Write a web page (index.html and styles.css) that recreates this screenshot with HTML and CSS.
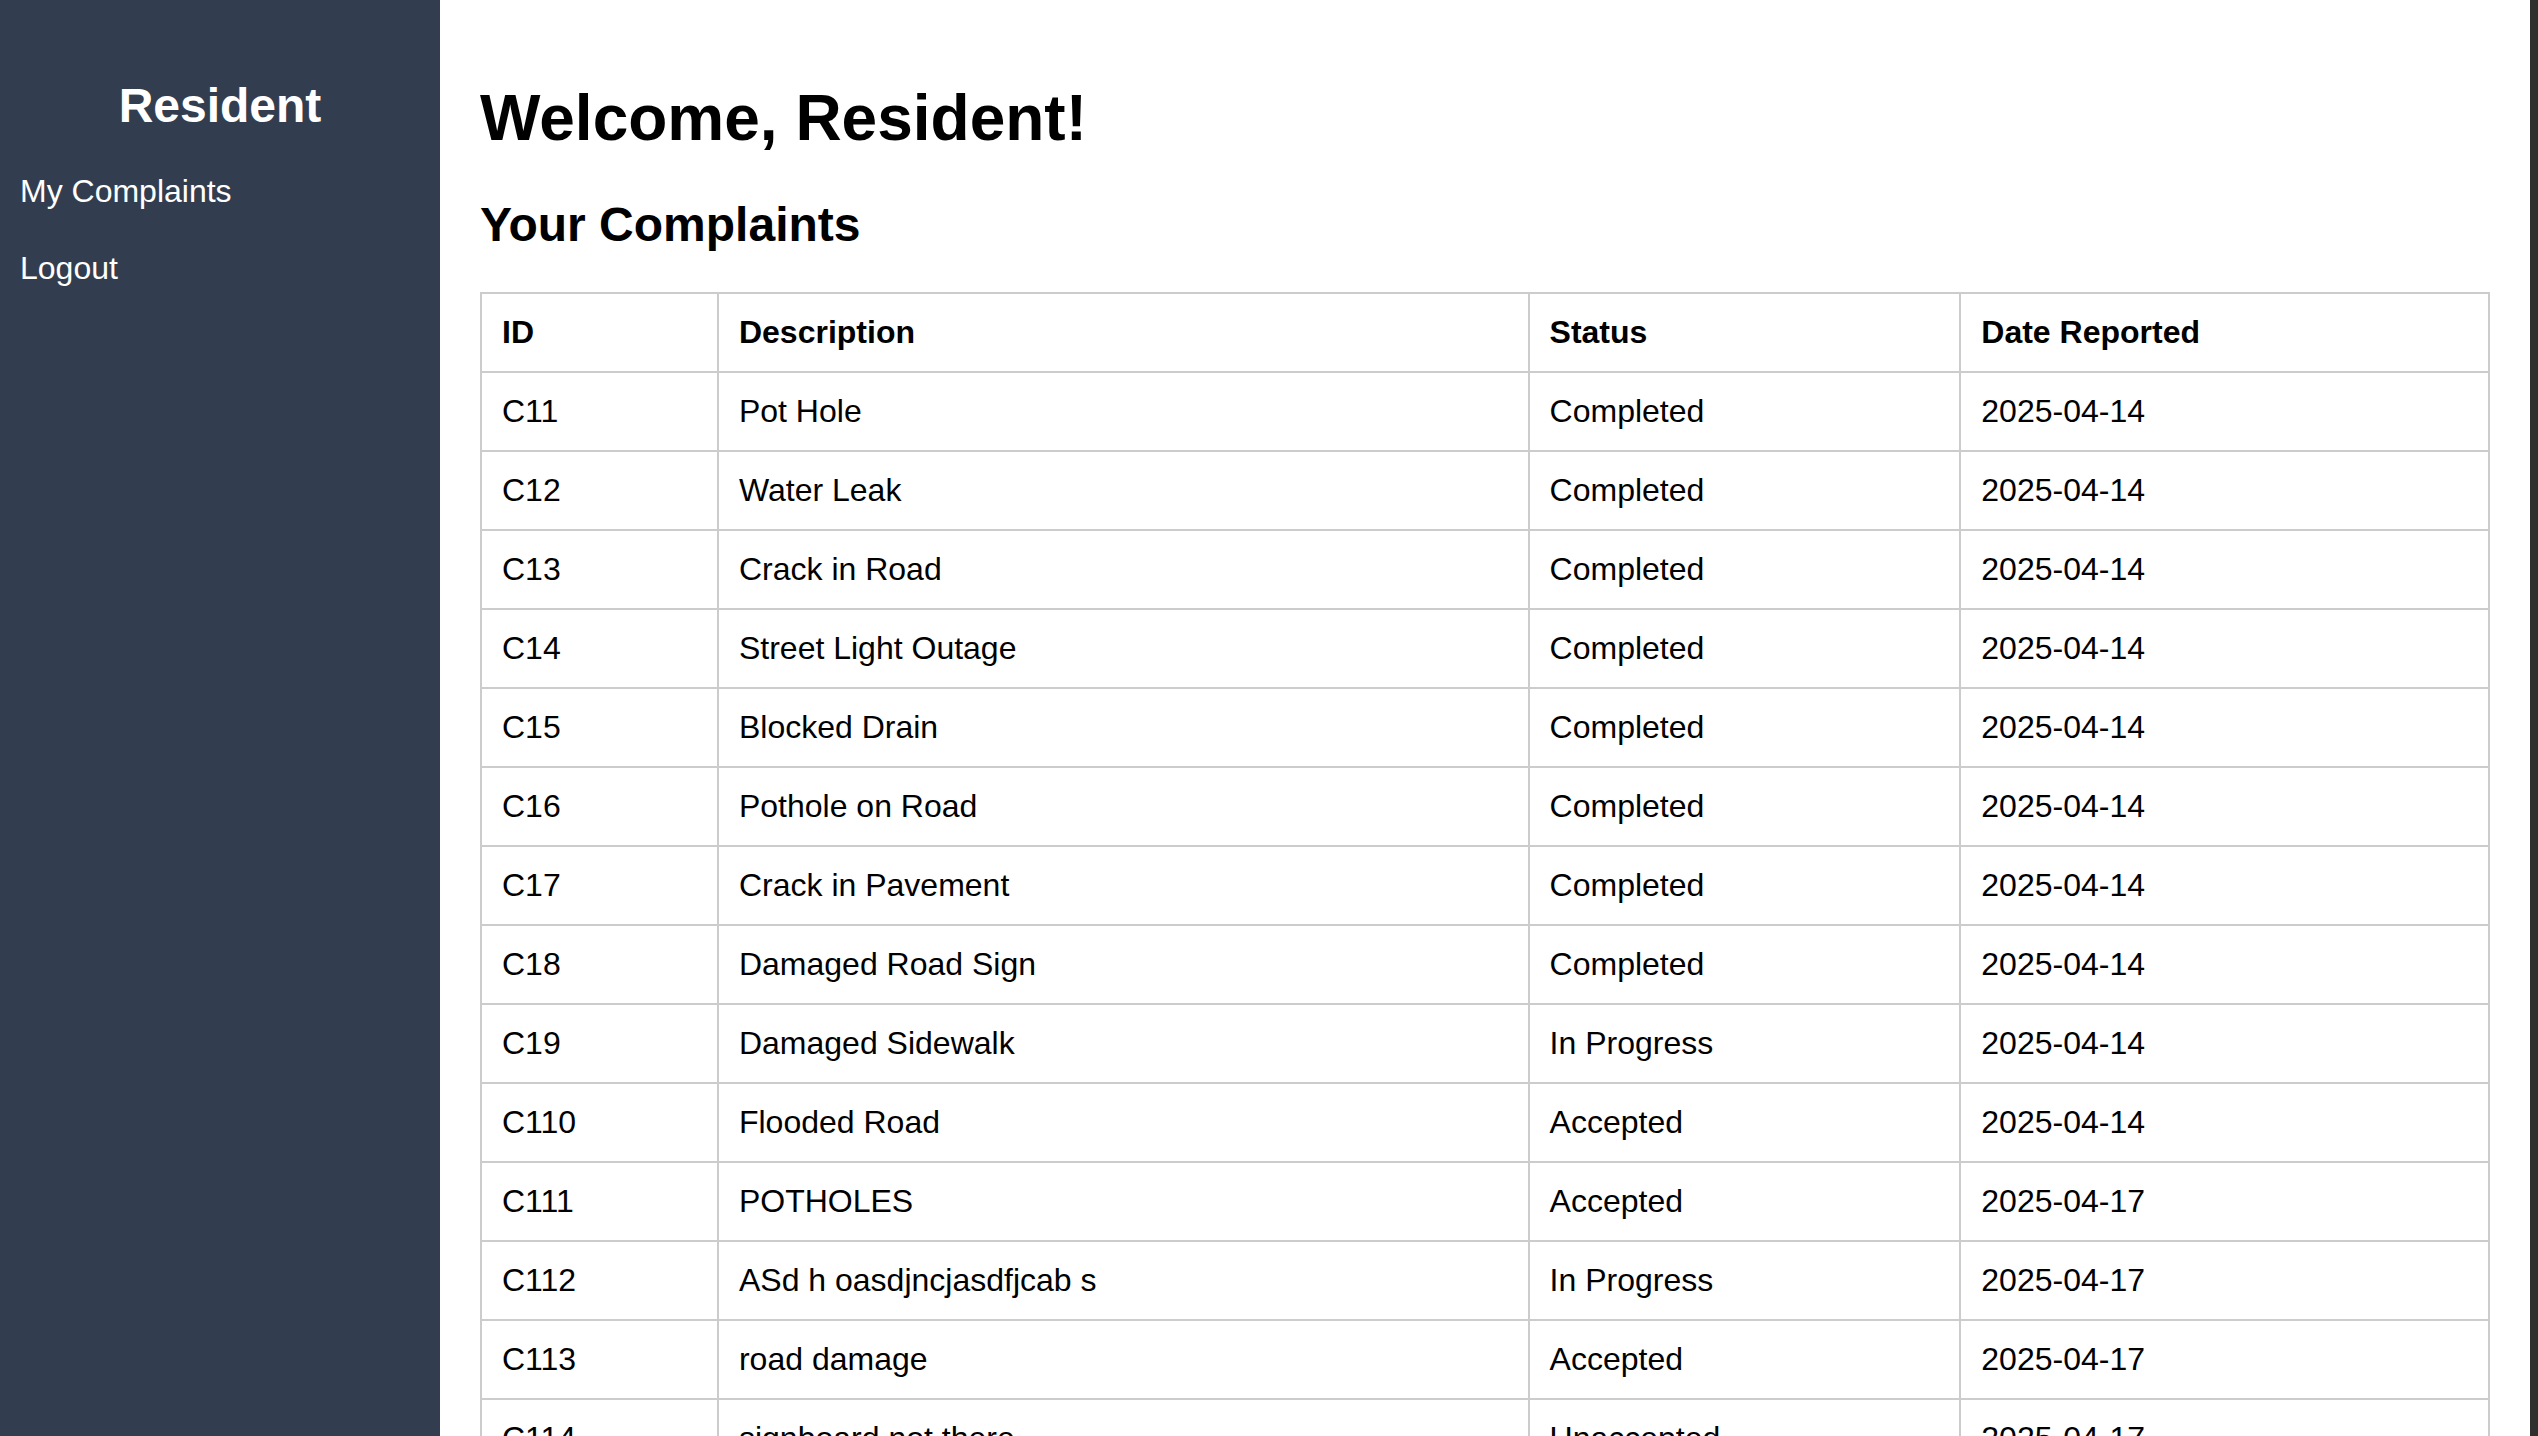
FILE: index.html
```html
<!DOCTYPE html>
<html lang="en">
<head>
<meta charset="utf-8">
<title>Resident Dashboard</title>
<link rel="stylesheet" href="styles.css">
</head>
<body>
<div class="layout">
  <aside class="sidebar">
    <h2 class="sidebar-title">Resident</h2>
    <nav class="sidebar-nav">
      <a class="nav-link" href="#">My Complaints</a>
      <a class="nav-link" href="#">Logout</a>
    </nav>
  </aside>
  <main class="content">
    <h1 class="page-title">Welcome, Resident!</h1>
    <h2 class="section-title">Your Complaints</h2>
    <table class="complaints">
      <colgroup>
        <col class="col-id">
        <col class="col-desc">
        <col class="col-status">
        <col class="col-date">
      </colgroup>
      <thead>
        <tr><th>ID</th><th>Description</th><th>Status</th><th>Date Reported</th></tr>
      </thead>
      <tbody>
        <tr><td>C11</td><td>Pot Hole</td><td>Completed</td><td>2025-04-14</td></tr>
        <tr><td>C12</td><td>Water Leak</td><td>Completed</td><td>2025-04-14</td></tr>
        <tr><td>C13</td><td>Crack in Road</td><td>Completed</td><td>2025-04-14</td></tr>
        <tr><td>C14</td><td>Street Light Outage</td><td>Completed</td><td>2025-04-14</td></tr>
        <tr><td>C15</td><td>Blocked Drain</td><td>Completed</td><td>2025-04-14</td></tr>
        <tr><td>C16</td><td>Pothole on Road</td><td>Completed</td><td>2025-04-14</td></tr>
        <tr><td>C17</td><td>Crack in Pavement</td><td>Completed</td><td>2025-04-14</td></tr>
        <tr><td>C18</td><td>Damaged Road Sign</td><td>Completed</td><td>2025-04-14</td></tr>
        <tr><td>C19</td><td>Damaged Sidewalk</td><td>In Progress</td><td>2025-04-14</td></tr>
        <tr><td>C110</td><td>Flooded Road</td><td>Accepted</td><td>2025-04-14</td></tr>
        <tr><td>C111</td><td>POTHOLES</td><td>Accepted</td><td>2025-04-17</td></tr>
        <tr><td>C112</td><td>ASd h oasdjncjasdfjcab s</td><td>In Progress</td><td>2025-04-17</td></tr>
        <tr><td>C113</td><td>road damage</td><td>Accepted</td><td>2025-04-17</td></tr>
        <tr><td>C114</td><td>signboard not there</td><td>Unaccepted</td><td>2025-04-17</td></tr>
      </tbody>
    </table>
  </main>
  <div class="window-edge"></div>
</div>
</body>
</html>
```

FILE: styles.css
```css
html, body {
  margin: 0;
  padding: 0;
  height: 100%;
  overflow: hidden;
}

body {
  font-family: "Liberation Sans", Arial, Helvetica, sans-serif;
  font-size: 32px;
  color: #000;
  background: #fff;
}

.layout {
  display: flex;
  height: 100vh;
  overflow: hidden;
}

.sidebar {
  width: 440px;
  flex: 0 0 440px;
  background: #323e4f;
  color: #fff;
  padding: 40px 20px 0;
  box-sizing: border-box;
}

.sidebar-title {
  font-size: 48px;
  font-weight: bold;
  text-align: center;
  margin: 38px 0 20px;
  line-height: normal;
}

.sidebar-nav {
  display: flex;
  flex-direction: column;
}

.nav-link {
  color: #fff;
  text-decoration: none;
  padding: 20px 0;
  font-size: 32px;
}

.content {
  flex: 1;
  min-width: 0;
  padding: 39px 40px 40px;
  box-sizing: border-box;
  overflow: hidden;
}

.page-title {
  font-size: 64px;
  font-weight: bold;
  margin: 42px 0;
}

.section-title {
  font-size: 48px;
  font-weight: bold;
  margin: 40px 0;
}

.complaints {
  width: 100%;
  border-collapse: collapse;
  table-layout: fixed;
}

.col-id { width: 11.8%; }
.col-desc { width: 40.37%; }
.col-status { width: 21.5%; }
.col-date { width: 26.33%; }

.complaints th,
.complaints td {
  border: 2px solid #cccccc;
  padding: 20px;
  text-align: left;
  font-size: 32px;
  line-height: normal;
}

.complaints th {
  font-weight: bold;
}

.window-edge {
  width: 8px;
  flex: 0 0 8px;
  background: #2f2f2f;
}
```
